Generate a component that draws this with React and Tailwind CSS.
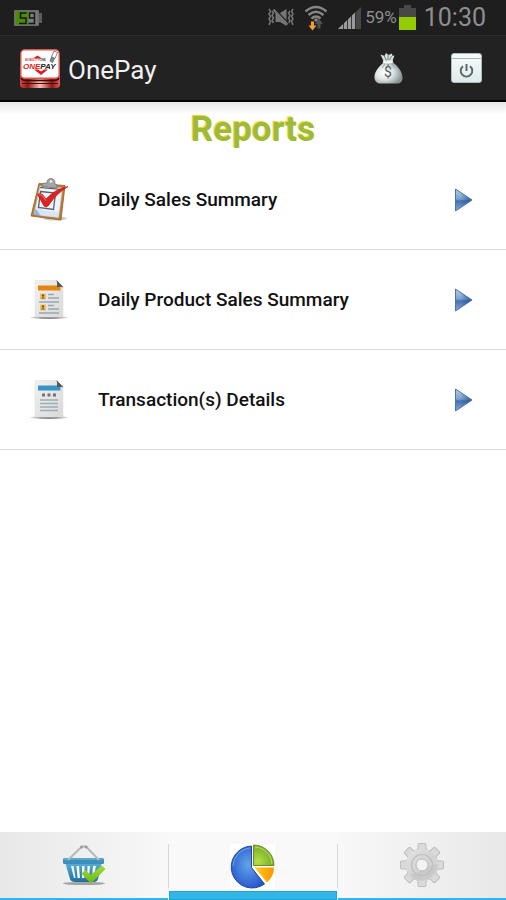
import React from 'react';

function BatteryBadge() {
  return (
    <svg width="28" height="18" viewBox="0 0 28 18" aria-label="Battery 59">
      <rect x="0" y="1" width="25" height="16" rx="1" fill="#6c6c6c" />
      <rect x="25" y="4" width="3" height="10" rx="1" fill="#5c5c5c" />
      <rect x="1.500" y="2.500" width="22" height="13" fill="#7d7d7d" />
      <rect x="1.500" y="2.500" width="13" height="13" fill="#4c8a0a" />
      <g fill="none" stroke="#151515" strokeWidth="1.500">
        <path d="M12.500 4H6.500v5h5.500v5.500H5" />
        <path d="M20.500 9h-5V4h5v10.500h-6" />
      </g>
    </svg>
  );
}

function VibrateIcon() {
  return (
    <svg width="26" height="19" viewBox="0 0 26 19" fill="none" stroke="#757575" strokeWidth="1.500">
      <path d="M1 1l1.500 2.400L1 6l1.500 2.500L1 11l1.500 2.500L1 17" />
      <path d="M4 3l1.500 2L4 7.500 5.500 10 4 12.500 5.500 15" />
      <path d="M25 1l-1.500 2.400L25 6l-1.500 2.500L25 11l-1.500 2.500L25 17" />
      <path d="M22 3l-1.500 2L22 7.500 20.500 10l1.500 2.500-1.500 2.500" />
      <path d="M7.500 5h4.500L18.500 1v17L12 14H7.500z" fill="#757575" stroke="none" />
      <path d="M7 1l13 14" stroke="#1e1e1e" strokeWidth="1.500" />
      <path d="M5.500 1.500l14 15" strokeWidth="2" />
    </svg>
  );
}

function WifiIcon() {
  return (
    <svg width="24" height="26" viewBox="0 0 24 26" fill="none">
      <g stroke="#858585" strokeWidth="2.400">
        <path d="M1.500 6.500Q12 -2.500 22.500 6.500" />
        <path d="M4.500 10Q12 3.500 19.500 10" />
        <path d="M7.500 13.500Q12 9.500 16.500 13.500" />
      </g>
      <circle cx="12" cy="15" r="1.800" fill="#858585" />
      <path d="M7 16.500h3V20.500h2.500l-4 5-4-5H7z" fill="#f3a02c" />
      <path d="M13.500 23.500h3V19H19l-4-5-4 5h2.500z" fill="#505050" />
    </svg>
  );
}

function SignalIcon() {
  return (
    <svg width="23" height="22" viewBox="0 0 23 22">
      <path d="M0 22L23 0v22z" fill="#474747" />
      <path d="M0 22L17.500 5V22z" fill="#9a9a9a" />
      <path d="M5.500 14v8M9.500 10v12M13.500 6v16M17.500 3v19" stroke="#1e1e1e" strokeWidth=".8" />
    </svg>
  );
}

function BatteryIcon() {
  return (
    <svg width="17" height="25" viewBox="0 0 17 25">
      <path d="M5 0h7v3h5v9H0V3h5z" fill="#484848" />
      <rect y="12" width="17" height="13" fill="#94cb02" />
    </svg>
  );
}

function OnePayLogo() {
  return (
    <svg width="40" height="39" viewBox="0 0 40 39" aria-hidden="true">
      <defs>
        <linearGradient id="logoBase">
          <stop offset="0" stopColor="#d8463c" />
          <stop offset=".2" stopColor="#8d1712" />
          <stop offset=".5" stopColor="#f8bdb4" />
          <stop offset=".8" stopColor="#8d1712" />
          <stop offset="1" stopColor="#e0635c" />
        </linearGradient>
      </defs>
      <rect y="8" width="40" height="31" rx="4" fill="url(#logoBase)" />
      <path d="M1 29q1 2.500 5 2.500h28q4 0 5-2.500" fill="none" stroke="#3c0806" strokeWidth="1.500" />
      <path d="M2 34.500h36" stroke="#4a0c08" strokeWidth="1" />
      <rect x=".8" y=".8" width="38.400" height="28.400" rx="4" fill="#fff" stroke="#d8564c" strokeWidth="1.400" />
      <path d="M13 9.500l4.500-3 4.500 3z" fill="#e01a1a" />
      <path d="M14 20.500h4l3 2 3-2h4l-7 5.500z" fill="#e01a1a" />
      <text x="5" y="11.500" fontSize="3" fontFamily="Liberation Sans, sans-serif" fontWeight="bold" fill="#e14040">MOBILITY<tspan fill="#444">ONE</tspan></text>
      <text x="3" y="19.500" fontSize="8" fontFamily="Liberation Sans, sans-serif" fontWeight="bold" fontStyle="italic" fill="#e01a1a">ONE<tspan fill="#222">PAY</tspan></text>
      <g fill="none" stroke="#666" strokeWidth=".8">
        <path d="M34 2l3.500 1.500-2.500 6-3.500-2z" />
        <path d="M31.500 8l3 1.500-2 4-2.500-1.500z" fill="#888" />
      </g>
    </svg>
  );
}

function MoneyBagIcon() {
  return (
    <svg width="29" height="31" viewBox="0 0 29 31">
      <defs>
        <radialGradient id="bag" cx=".35" cy=".5" r=".65">
          <stop offset="0" stopColor="#fff" />
          <stop offset=".5" stopColor="#dde4e3" />
          <stop offset="1" stopColor="#84918f" />
        </radialGradient>
      </defs>
      <path d="M10 9C4 14 0 20 .5 25c.5 4 3 5.500 6 5.500h16c4 0 6-2 6-5.500C28.500 19 24 13 18 9z" fill="url(#bag)" />
      <path d="M10 9L6.500 1.500l4 1.500L12 0l2.500 2L18 .5l.5 2.500 2-.5L18 9z" fill="#d8e0de" />
      <path d="M10 2.500l2.500 5M14 2v5M17.500 3l-2 4" stroke="#71807c" strokeWidth="1" />
      <path d="M9 8.500q5 2 10 0" stroke="#f5f8f7" strokeWidth="2" fill="none" />
      <path d="M11 11l-3 4M14 11v1.500M18 11l3 4" stroke="#9dabaa" strokeWidth="1" />
      <text x="14" y="24" textAnchor="middle" fontSize="14" fontFamily="Roboto, sans-serif" fill="#52605e">$</text>
    </svg>
  );
}

function PowerIcon() {
  return (
    <svg width="31" height="30" viewBox="0 0 31 30">
      <defs>
        <linearGradient id="power" x1="0" y1="0" x2="0" y2="1">
          <stop offset="0" stopColor="#f8fafa" />
          <stop offset="1" stopColor="#dcebea" />
        </linearGradient>
      </defs>
      <rect x=".5" y=".5" width="30" height="29" rx="2.500" fill="url(#power)" stroke="#aebdbb" />
      <path d="M1 5.500h29" stroke="#a9b6b6" />
      <path d="M12 13.200a5.800 5.800 0 1 0 7 0M15.500 11v7" fill="none" stroke="#596563" strokeWidth="1.900" />
    </svg>
  );
}

function ClipboardIcon() {
  return (
    <svg width="42" height="44" viewBox="0 0 42 44">
      <ellipse cx="27" cy="40.500" rx="12" ry="2" fill="#cfcfcf" />
      <path d="M11 5.500l26 2L33 42 3 38z" fill="#bb7c33" stroke="#94601f" strokeWidth=".8" strokeLinejoin="round" />
      <path d="M12 8l22.500 2-4 29.500L6 36z" fill="#eef3fa" stroke="#c2cad6" strokeWidth=".6" />
      <path d="M7 31q5 2 6 7l-7-1.500z" fill="#8fb2e0" />
      <path d="M8 28q1 8 6 10l16 1.500 1-6q-15 1-23-5.500z" fill="#d3e1f3" opacity=".8" />
      <path d="M12 9.500l22 2" stroke="#4a4a4a" strokeWidth="1.200" />
      <path d="M12.500 13.500l15 1.500-2 16.500-15-2z" fill="none" stroke="#5b616b" strokeWidth="1.300" />
      <path d="M14 5.500l5-.5q0-4.500 4-4.500T27 6l2 1v3l-15-1.500z" fill="#a5a5a5" stroke="#6b6b6b" strokeWidth=".7" />
      <circle cx="23" cy="3.500" r="1.300" fill="#f2f2f2" />
      <path d="M9.500 16.500q3-2 5.500.5l3 4Q27 11 40 8.500 29 15 20.500 27.500q-2 2.500-4.500.5z" fill="#dc2222" stroke="#b51313" strokeWidth=".6" />
      <path d="M11 17q2-1 3.500.8l3.500 5" fill="none" stroke="#f27a74" strokeWidth="1" />
    </svg>
  );
}

function PageBase({ id }) {
  return (
    <>
      <defs>
        <linearGradient id={id} x1="0" y1="0" x2="1" y2="1">
          <stop offset="0" stopColor="#f1f1f1" />
          <stop offset="1" stopColor="#d9d9d9" />
        </linearGradient>
        <linearGradient id={id + 'Shadow'}>
          <stop offset="0" stopColor="#aaa" stopOpacity=".3" />
          <stop offset=".3" stopColor="#888" />
          <stop offset=".7" stopColor="#888" />
          <stop offset="1" stopColor="#aaa" stopOpacity=".3" />
        </linearGradient>
      </defs>
      <ellipse cx="19" cy="37.500" rx="19" ry="1.500" fill={`url(#${id}Shadow)`} />
      <path d="M6 0h20l7 7v30H5V1z" fill={`url(#${id})`} stroke="#dcdcdc" strokeWidth=".5" />
    </>
  );
}

function FoldedCorner() {
  return <path d="M26.500 0l7 7.200q-4-1-6.500-.2.500-4-.5-7z" fill="#555" />;
}

function ProductReportIcon() {
  return (
    <svg width="38" height="39" viewBox="0 0 38 39">
      <PageBase id="productPage" />
      <rect x="8" y="5.500" width="22.500" height="5" fill="#e2860f" />
      <rect x="10" y="13.500" width="6" height="6" fill="#f0bd68" />
      <rect x="10" y="24.500" width="6" height="6" fill="#f0bd68" />
      <path d="M11 18.500q2-3 4 0zM11 29.500q2-3 4 0z" fill="#80571b" />
      <circle cx="13" cy="15.500" r="1.200" fill="#80571b" />
      <circle cx="13" cy="26.500" r="1.200" fill="#80571b" />
      <path d="M18 14.500h6M18 18h11M9 22h20M18 25.500h6M18 29h11M9 33h20" stroke="#94a9b1" strokeWidth="1.300" />
      <FoldedCorner />
    </svg>
  );
}

function TransactionReportIcon() {
  return (
    <svg width="38" height="39" viewBox="0 0 38 39">
      <PageBase id="transactionPage" />
      <rect x="8" y="5.500" width="22.500" height="5" fill="#3695c4" />
      <path d="M12 13.500h3v3h-3zM17.500 13.500h3v3h-3zM23 13.500h3v3h-3z" fill="#737373" />
      <path d="M10 20h18M10 23.500h18M10 27h18M10 30.500h18" stroke="#9caeb6" strokeWidth="1.400" />
      <FoldedCorner />
    </svg>
  );
}

function ArrowIcon() {
  return (
    <svg width="19" height="24" viewBox="0 0 19 24" aria-hidden="true">
      <defs>
        <linearGradient id="arrow" x1="0" y1="0" x2="0" y2="1">
          <stop offset="0" stopColor="#b4cbe2" />
          <stop offset=".46" stopColor="#7ba3cd" />
          <stop offset=".54" stopColor="#4471b2" />
          <stop offset="1" stopColor="#86a8d8" />
        </linearGradient>
        <linearGradient id="arrowShade">
          <stop offset=".3" stopColor="#1f4f94" stopOpacity="0" />
          <stop offset="1" stopColor="#1f4f94" stopOpacity=".8" />
        </linearGradient>
      </defs>
      <path d="M1.500 1L18 12 1.500 23z" fill="url(#arrow)" />
      <path d="M1.500 1L18 12 1.500 23z" fill="url(#arrowShade)" stroke="#4a75ab" strokeWidth="1" strokeLinejoin="round" />
    </svg>
  );
}

function BasketIcon() {
  return (
    <svg width="44" height="41" viewBox="0 0 44 41">
      <defs>
        <linearGradient id="basket" x1="0" y1="0" x2="0" y2="1">
          <stop offset="0" stopColor="#5fb0d6" />
          <stop offset="1" stopColor="#226f9e" />
        </linearGradient>
        <linearGradient id="basketCheck" x1="0" y1="0" x2="0" y2="1">
          <stop offset="0" stopColor="#a4de31" />
          <stop offset="1" stopColor="#6cbc13" />
        </linearGradient>
      </defs>
      <ellipse cx="22" cy="38.500" rx="21" ry="1.600" fill="#a3a3a3" />
      <path d="M3 17h37l-4 17q-1 3-4 3H13q-4 0-5-3z" fill="url(#basket)" />
      <path d="M9 21h2.500l2 12H12zM14.500 21H17l1 12h-2.500zM20 21h2.500v12H20zM25.500 21H28l-1 12h-2zM31 21h3l-2.500 12H30z" fill="#f3f7fa" />
      <rect x="1" y="13" width="41" height="6" rx="1.500" fill="#3a8fbc" />
      <path d="M2 14h39" stroke="#7cc0df" strokeWidth="1" />
      <path d="M6 15L20 1.500h4L37 15" fill="none" stroke="#b9b9b9" strokeWidth="2" />
      <circle cx="19.500" cy="2" r="1.500" fill="#9c9c9c" />
      <circle cx="24" cy="2" r="1.500" fill="#9c9c9c" />
      <path d="M19.500 28.500l4-3.500 5 5L40 20.500l3.500 3.500-13 13q-1.500 1-3 0z" fill="url(#basketCheck)" />
    </svg>
  );
}

function PieIcon() {
  return (
    <svg width="45" height="45" viewBox="0 0 45 45">
      <defs>
        <radialGradient id="pieBlue" cx=".5" cy=".45" r=".6">
          <stop offset="0" stopColor="#62a4ea" />
          <stop offset="1" stopColor="#2556cb" />
        </radialGradient>
        <radialGradient id="pieGreen" cx=".2" cy=".8" r=".9">
          <stop offset="0" stopColor="#b5dd4a" />
          <stop offset="1" stopColor="#6fa41c" />
        </radialGradient>
        <linearGradient id="pieOrange">
          <stop offset="0" stopColor="#ffcf18" />
          <stop offset="1" stopColor="#ff9300" />
        </linearGradient>
      </defs>
      <rect width="45" height="45" fill="#fff" />
      <path d="M21.500 2v21.500L34.500 40A21 21 0 1 1 21.500 2z" fill="url(#pieBlue)" stroke="#23499c" />
      <path d="M20 4A19 19 0 0 0 3 22" fill="none" stroke="#77a3e8" />
      <path d="M23.500 1A20.500 20.500 0 0 1 44 21.500H23.500z" fill="url(#pieGreen)" stroke="#668f25" />
      <path d="M25 3A18 18 0 0 1 42 20" fill="none" stroke="#bbdc78" />
      <path d="M24.500 23.500H44q0 8.500-7 15z" fill="url(#pieOrange)" />
    </svg>
  );
}

function GearIcon() {
  const teeth = [0, 45, 90, 135, 180, 225, 270, 315];
  return (
    <svg width="44" height="44" viewBox="0 0 44 44">
      <defs>
        <linearGradient id="gear" x1="0" y1="0" x2="1" y2="1">
          <stop offset="0" stopColor="#e4e4e4" />
          <stop offset=".55" stopColor="#d2d2d2" />
          <stop offset="1" stopColor="#dedede" />
        </linearGradient>
      </defs>
      <g fill="#dadada" stroke="#bdbdbd" strokeWidth="1" strokeLinejoin="round">
        {teeth.map((angle) => (
          <path key={angle} d="M16 9l2-4V1.500q0-1 1-1h6q1 0 1 1V5l2 4z" transform={`rotate(${angle} 22 22)`} />
        ))}
      </g>
      <circle cx="22" cy="22" r="16.300" fill="url(#gear)" />
      <path d="M9.500 31a15.500 15.500 0 0 0 28-10q-10 2-16 7-5 3-12 3z" fill="#c2c2c2" opacity=".6" />
      <circle cx="22" cy="22" r="10.500" fill="none" stroke="#bfbfbf" strokeWidth="1.200" />
      <circle cx="22" cy="22" r="6" fill="#f3f3f3" stroke="#bababa" strokeWidth="1" />
    </svg>
  );
}

const reports = [
  { title: 'Daily Sales Summary', icon: <ClipboardIcon /> },
  { title: 'Daily Product Sales Summary', icon: <ProductReportIcon /> },
  { title: 'Transaction(s) Details', icon: <TransactionReportIcon /> },
];

function StatusBar() {
  return (
    <div className="flex h-9 items-center justify-between border-b border-[#303030] bg-[#1e1e1e] pl-3.5 pr-5 text-[#8e8e8e]">
      <BatteryBadge />
      <div className="flex items-center">
        <VibrateIcon />
        <span className="ml-2.5"><WifiIcon /></span>
        <span className="ml-2.5"><SignalIcon /></span>
        <span className="ml-1 text-[17px]">59%</span>
        <span className="ml-0.5"><BatteryIcon /></span>
        <span className="ml-2 text-[25px] leading-8">10:30</span>
      </div>
    </div>
  );
}

function Header() {
  return (
    <header className="flex h-[66px] items-center border-b-2 border-black bg-[#222] pl-5 pr-6">
      <OnePayLogo />
      <span className="ml-2 flex-1 pt-1 text-[26px] text-[#f0f0f0]">OnePay</span>
      <button type="button" aria-label="Payments"><MoneyBagIcon /></button>
      <button type="button" aria-label="Log out" className="ml-12"><PowerIcon /></button>
    </header>
  );
}

function TabBar() {
  return (
    <nav className="grid h-17 grid-cols-3">
      <button
        type="button"
        aria-label="Sales"
        className="flex items-center justify-center border-b-2 border-[#33b5e5] bg-linear-to-r from-[#e8e8e8] to-[#f8f8f8]"
      >
        <BasketIcon />
      </button>
      <button type="button" aria-label="Reports" aria-current="page" className="z-10 -mx-px flex flex-col bg-[#f9f9f9]">
        <span className="mt-3 flex h-11 w-full items-center justify-center border-x border-[#d8d8d8]">
          <PieIcon />
        </span>
        <span className="mx-px mt-auto h-[9px] self-stretch border border-[#1ba5dc] bg-[#33b5e5]" />
      </button>
      <button
        type="button"
        aria-label="Settings"
        className="flex items-center justify-center border-b-2 border-[#33b5e5] bg-linear-to-r from-[#f8f8f8] to-[#e8e8e8]"
      >
        <GearIcon />
      </button>
    </nav>
  );
}

export default function App() {
  return (
    <div className="flex min-h-screen flex-col bg-white font-['Roboto',sans-serif]">
      <StatusBar />
      <Header />
      <main className="flex-1">
        <h1 className="h-12 bg-linear-to-b from-[#e6e6e6] to-white to-25% pt-1 text-center text-[35px] leading-12 font-bold text-[#9dbb38] [text-shadow:-1px_-1px_1px_#f5cf1c]">
          Reports
        </h1>
        <ul>
          {reports.map((report) => (
            <li key={report.title} className="border-b border-[#dcdcdc]">
              <button type="button" className="flex h-[99px] w-full items-center pl-7 pr-[33px] text-left">
                <span className="flex w-[42px] justify-center">{report.icon}</span>
                <span className="ml-7 flex-1 pt-0.5 text-[19px] font-medium text-[#111]">{report.title}</span>
                <ArrowIcon />
              </button>
            </li>
          ))}
        </ul>
      </main>
      <TabBar />
    </div>
  );
}
